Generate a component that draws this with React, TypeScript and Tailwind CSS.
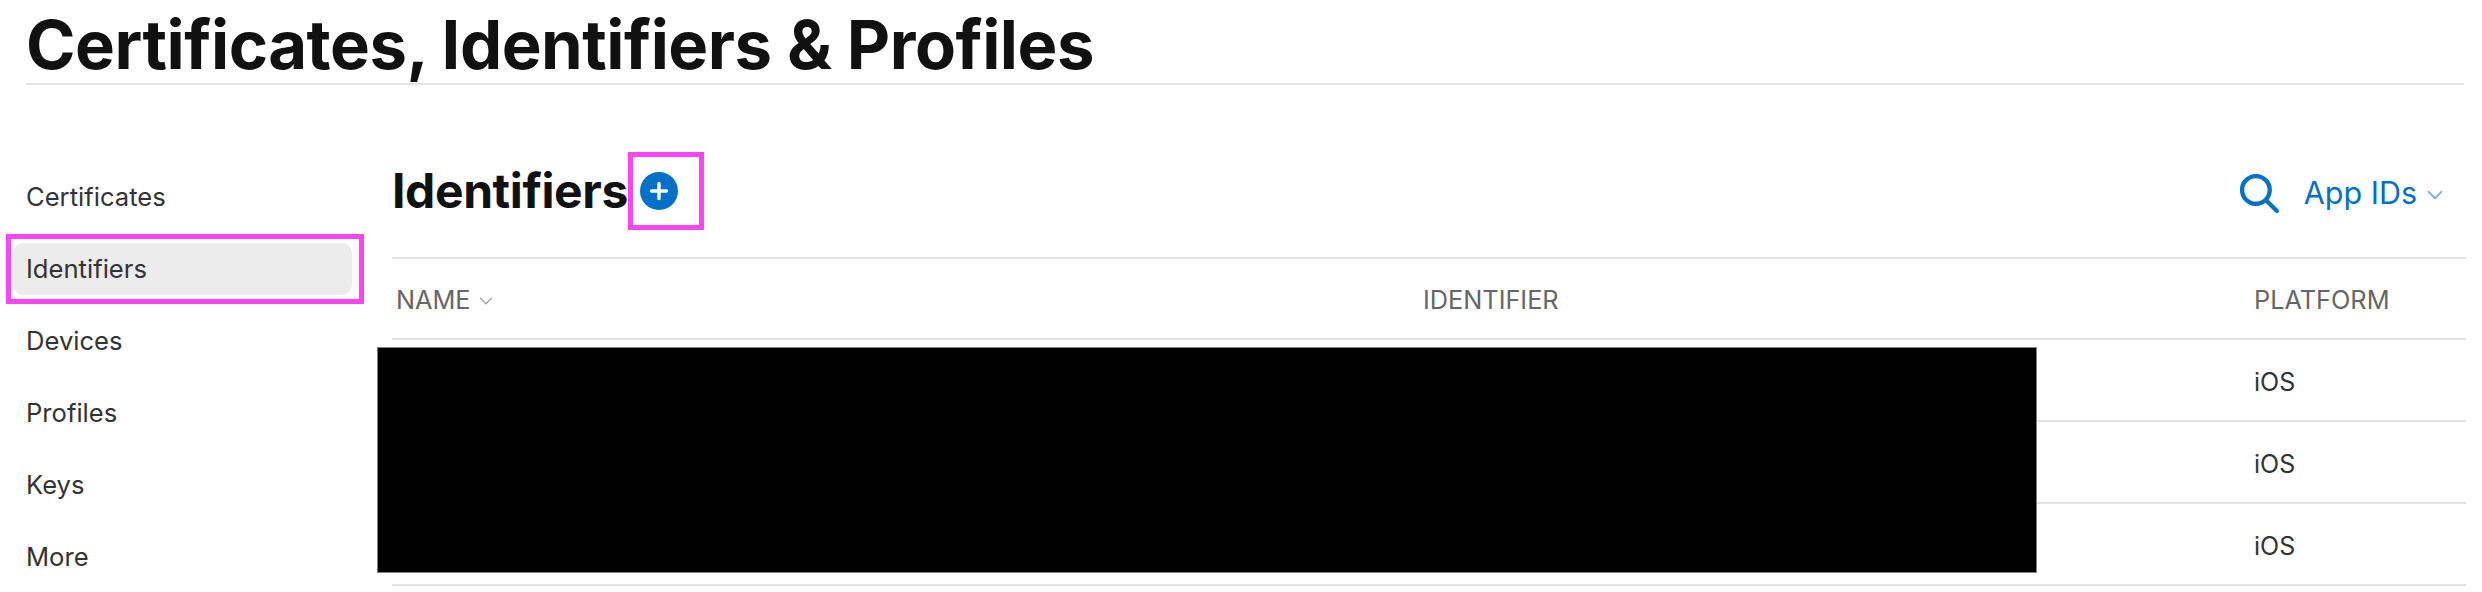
import { ChevronDown } from "lucide-react";

const navItems = ["Certificates", "Identifiers", "Devices", "Profiles", "Keys", "More"];

function SearchGlyph() {
  return (
    <svg width="41" height="41" viewBox="0 0 40 40" fill="none" stroke="#0070c9" strokeWidth="4.2" strokeLinecap="round">
      <circle cx="16.5" cy="16.5" r="13.5" />
      <path d="M26.5 26.5 L37 37" />
    </svg>
  );
}

function PlusBadge() {
  return (
    <div className="w-[76px] h-[78px] border-[5px] border-[#ff44f5] flex items-center pl-[7px]">
      <div className="w-[38px] h-[38px] rounded-full bg-[#0070c9] flex items-center justify-center">
        <svg width="20" height="20" viewBox="0 0 20 20" stroke="white" strokeWidth="3.4" strokeLinecap="round">
          <path d="M10 2.5 V17.5 M2.5 10 H17.5" />
        </svg>
      </div>
    </div>
  );
}

function Sidebar() {
  return (
    <nav className="w-[392px] shrink-0 pt-[9px] pl-[6px] flex flex-col text-[25.6px] text-[#333336]">
      {navItems.map((item) =>
        item === "Identifiers" ? (
          <div key={item} className="w-[358px] h-[70px] my-px border-[5px] border-[#ff44f5] py-[4px] pl-[2px]">
            <div className="h-full w-[339px] rounded-[10px] bg-[#ececec] flex items-center pl-[13px]">
              {item}
            </div>
          </div>
        ) : (
          <div key={item} className="h-[72px] flex items-center pl-[20px]">
            {item}
          </div>
        ),
      )}
    </nav>
  );
}

export default function App() {
  return (
    <div className="relative w-[2482px] h-[592px] overflow-hidden bg-white font-['Inter','Liberation_Sans',sans-serif]">
      <header className="ml-[26px] mr-[18px] h-[85px] border-b-2 border-[#e3e3e3]">
        <h1 className="text-[67px] leading-[90px] font-bold text-[#111111] tracking-[-0.5px]">
          Certificates, Identifiers &amp; Profiles
        </h1>
      </header>

      <div className="flex mt-[67px]">
        <Sidebar />

        <main className="w-[2074px]">
          <div className="h-[107px] border-b-2 border-[#e3e3e3] flex items-start justify-between pr-[18px]">
            <div className="flex items-center">
              <h2 className="text-[48px] font-bold text-[#111111] leading-none tracking-[-0.4px]">Identifiers</h2>
              <PlusBadge />
            </div>
            <div className="h-[82px] flex items-center text-[#0070c9]">
              <SearchGlyph />
              <span className="ml-[24px] text-[30.5px]">App IDs</span>
              <ChevronDown className="ml-[5px] mt-[4px] w-[26px] h-[26px] text-[#0070c9]/50" strokeWidth={1.8} />
            </div>
          </div>

          <div className="h-[81px] pt-[2px] border-b-2 border-[#e3e3e3] grid grid-cols-[1031px_831px_1fr] text-[25.3px] text-[#666666]">
            <div className="flex items-center pl-[4px]">
              NAME
              <ChevronDown className="ml-[4px] mt-[3px] w-[22px] h-[22px] text-[#aaaaaa]" strokeWidth={1.8} />
            </div>
            <div className="flex items-center">IDENTIFIER</div>
            <div className="flex items-center">PLATFORM</div>
          </div>

          {[0, 1, 2].map((i) => (
            <div key={i} className="h-[82px] border-b-2 border-[#e3e3e3] flex items-center pl-[1862px] pt-[6px] text-[25px] text-[#333336]">
              iOS
            </div>
          ))}
        </main>
      </div>

      {/* redaction over the name and identifier cells */}
      <div className="absolute left-[377px] top-[347px] w-[1660px] h-[226px] bg-black border border-[#808080]" />
    </div>
  );
}
